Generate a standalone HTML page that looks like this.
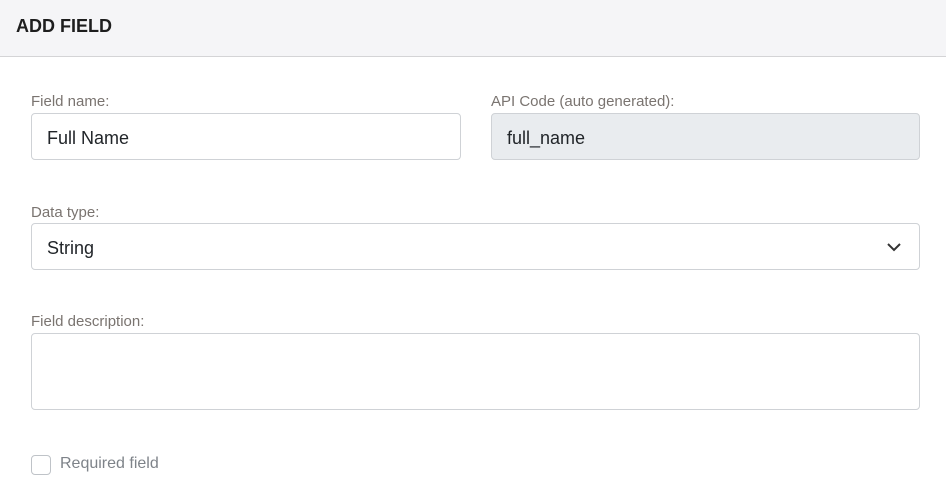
<!DOCTYPE html>
<html><head><style>
*{box-sizing:border-box;margin:0;padding:0}
body{width:946px;height:495px;background:#fff;font-family:"Liberation Sans",sans-serif;position:relative;overflow:hidden}
.hdr{position:absolute;left:0;top:0;width:946px;height:57px;background:#f5f5f7;border-bottom:1px solid #d4d4d6}
.hdr span{position:absolute;left:16px;top:16px;font-size:18px;font-weight:bold;color:#1e1e1e}
.lbl{position:absolute;font-size:15px;color:#7a7470}
.box{position:absolute;border:1px solid #cfd2d6;border-radius:4px;background:#fff;font-size:18px;color:#212529;padding-left:15px;padding-top:3px;display:flex;align-items:center}
</style></head><body>
<div class="hdr"><span>ADD FIELD</span></div>
<div class="lbl" style="left:31px;top:93px">Field name:</div>
<div class="box" style="left:31px;top:113px;width:430px;height:47px">Full Name</div>
<div class="lbl" style="left:491px;top:93px">API Code (auto generated):</div>
<div class="box" style="left:491px;top:113px;width:429px;height:47px;background:#e9ecef">full_name</div>
<div class="lbl" style="left:31px;top:204px">Data type:</div>
<div class="box" style="left:31px;top:223px;width:889px;height:47px">String
<svg style="position:absolute;right:18px;top:18px" width="14" height="10" viewBox="0 0 14 10"><path d="M1 2l6 6 6-6" fill="none" stroke="#333" stroke-width="2"/></svg></div>
<div class="lbl" style="left:31px;top:313px">Field description:</div>
<div class="box" style="left:31px;top:333px;width:889px;height:77px"></div>
<div style="position:absolute;left:31px;top:455px;width:20px;height:20px;border:1px solid #bfc3c8;border-radius:4px"></div>
<div class="lbl" style="left:60px;top:455px;color:#7e8389;font-size:16px">Required field</div>
</body></html>
